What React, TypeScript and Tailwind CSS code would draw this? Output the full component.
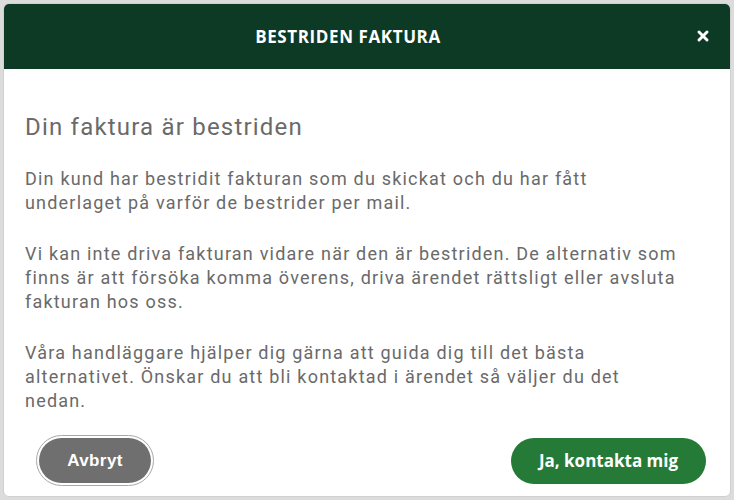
export default function App() {
  return (
    <div className="w-[734px] h-[500px] bg-[#dcdcdc] p-[3px]">
      <div className="h-full bg-white rounded-[6px] overflow-hidden flex flex-col border border-[#d0d0d0]">
        {/* Header */}
        <div className="h-[65px] bg-[#0d3a24] flex items-center justify-center relative shrink-0 pr-[38px]">
          <h1 className="text-white text-[17px] font-bold tracking-[0.6px] font-['Open_Sans',sans-serif]">
            BESTRIDEN FAKTURA
          </h1>
          <button className="absolute right-[20px] top-[25px] text-white">
            <svg width="14" height="14" viewBox="0 0 14 14" fill="none">
              <path d="M3 3l8 8M11 3l-8 8" stroke="white" strokeWidth="3" strokeLinecap="round" />
            </svg>
          </button>
        </div>

        {/* Body */}
        <div className="flex-1 px-[21px] pt-[43px] font-['Roboto',sans-serif] text-[#6a6a6a] whitespace-nowrap">
          <h2 className="text-[24px] leading-[30px] tracking-[1.2px]">Din faktura är bestriden</h2>
          <div className="mt-[25px] text-[18px] leading-[24px] tracking-[1.2px] flex flex-col gap-[27px]">
            <p>
              Din kund har bestridit fakturan som du skickat och du har fått
              <br />
              underlaget på varför de bestrider per mail.
            </p>
            <p>
              Vi kan inte driva fakturan vidare när den är bestriden. De alternativ som
              <br />
              finns är att försöka komma överens, driva ärendet rättsligt eller avsluta
              <br />
              fakturan hos oss.
            </p>
            <p>
              Våra handläggare hjälper dig gärna att guida dig till det bästa
              <br />
              alternativet. Önskar du att bli kontaktad i ärendet så väljer du det
              <br />
              nedan.
            </p>
          </div>

          <div className="mt-[22px] flex items-center justify-between pl-[11px] pr-[3px]">
            <button className="h-[51px] w-[118px] rounded-full border border-[#a8a8a8] p-[2px] bg-white">
              <span className="h-full w-full rounded-full bg-[#6f6f6f] flex items-center justify-center text-white font-bold text-[17px] tracking-[0.4px] font-['Liberation_Sans',sans-serif]">
                Avbryt
              </span>
            </button>
            <button className="h-[46px] w-[195px] rounded-full bg-[#247a36] text-white font-bold text-[17px] font-['Open_Sans',sans-serif]">
              Ja, kontakta mig
            </button>
          </div>
        </div>
      </div>
    </div>
  );
}
